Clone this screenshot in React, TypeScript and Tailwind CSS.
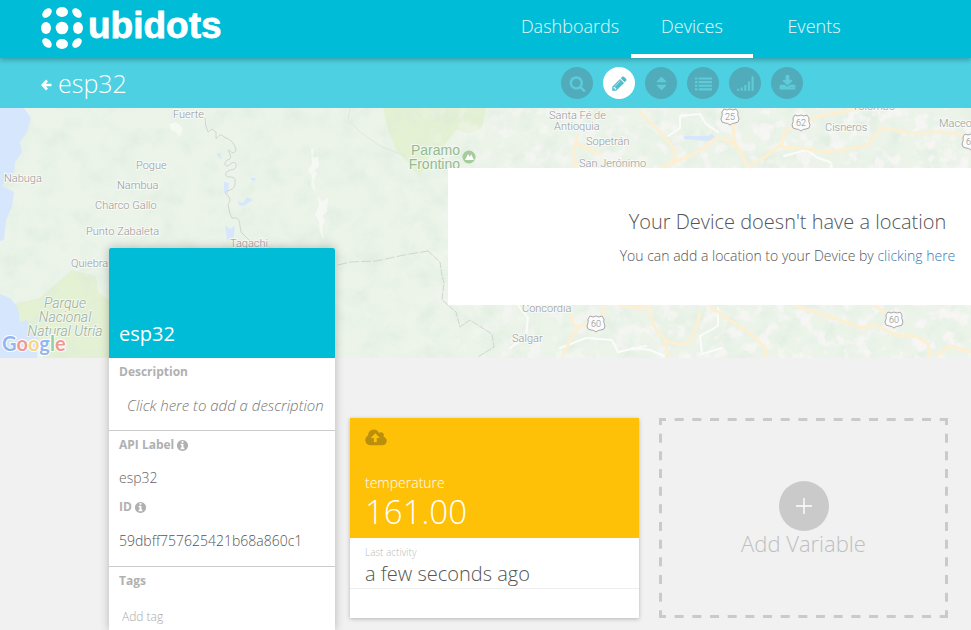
import { useState } from "react";
import type { ReactNode } from "react";

const PATHS = {
  search: "M1216 832q0-185-131.5-316.5t-316.5-131.5-316.5 131.5-131.5 316.5 131.5 316.5 316.5 131.5 316.5-131.5 131.5-316.5zm512 832q0 52-38 90t-90 38q-54 0-90-38l-343-342q-179 124-399 124-143 0-273.5-55.5t-225-150-150-225-55.5-273.5 55.5-273.5 150-225 225-150 273.5-55.5 273.5 55.5 225 150 150 225 55.5 273.5q0 220-124 399l343 343q37 37 37 90z",
  pencil: "M491 1536l91-91-235-235-91 91v107h128v128h107zm523-928q0-22-22-22-10 0-17 7l-542 542q-7 7-7 17 0 22 22 22 10 0 17-7l542-542q7-7 7-17zm-54-192l416 416-832 832h-416v-416zm683 96q0 53-37 90l-166 166-416-416 166-165q36-38 90-38 53 0 91 38l235 234q37 39 37 91z",
  sort: "M1408 1088q0 26-19 45l-448 448q-19 19-45 19t-45-19l-448-448q-19-19-19-45t19-45 45-19h896q26 0 45 19t19 45zm0-384q0 26-19 45t-45 19h-896q-26 0-45-19t-19-45 19-45l448-448q19-19 45-19t45 19l448 448q19 19 19 45z",
  list: "M0 256h256v224H0zM384 256h1408v224H384zM0 640h256v224H0zM384 640h1408v224H384zM0 1024h256v224H0zM384 1024h1408v224H384zM0 1408h256v224H0zM384 1408h1408v224H384z",
  signal: "M0 1440h224v224H0zM384 1312h224v352H384zM768 1056h224v608H768zM1152 672h224v992h-224zM1536 160h224v1504h-224z",
  download: "M1344 1344q0-26-19-45t-45-19-45 19-19 45 19 45 45 19 45-19 19-45zm256 0q0-26-19-45t-45-19-45 19-19 45 19 45 45 19 45-19 19-45zm128-224v320q0 40-28 68t-68 28h-1472q-40 0-68-28t-28-68v-320q0-40 28-68t68-28h465l135 136q58 56 136 56t136-56l136-136h464q40 0 68 28t28 68zm-325-569q17 41-14 70l-448 448q-18 19-45 19t-45-19l-448-448q-31-29-14-70 17-39 59-39h256v-448q0-26 19-45t45-19h256q26 0 45 19t19 45v448h256q42 0 59 39z",
  info: "M1152 1376v-160q0-14-9-23t-23-9h-96v-512q0-14-9-23t-23-9h-320q-14 0-23 9t-9 23v160q0 14 9 23t23 9h96v320h-96q-14 0-23 9t-9 23v160q0 14 9 23t23 9h448q14 0 23-9t9-23zm-128-896v-160q0-14-9-23t-23-9h-192q-14 0-23 9t-9 23v160q0 14 9 23t23 9h192q14 0 23-9t9-23zm640 416q0 209-103 385.5t-279.5 279.5-385.5 103-385.5-103-279.5-279.5-103-385.5 103-385.5 279.5-279.5 385.5-103 385.5 103 279.5 279.5 103 385.5z",
};

type IconName = keyof typeof PATHS;

function Icon({ name, className }: { name: IconName; className: string }) {
  return (
    <svg viewBox="0 0 1792 1792" fill="currentColor" aria-hidden className={className}>
      <path d={PATHS[name]} />
    </svg>
  );
}

const TOOLS: { name: IconName; label: string }[] = [
  { name: "search", label: "Search" },
  { name: "pencil", label: "Edit" },
  { name: "sort", label: "Sort" },
  { name: "list", label: "List view" },
  { name: "signal", label: "Signal" },
  { name: "download", label: "Download" },
];

const TOWNS: [string, number, number][] = [
  ["Fuerte", 173, 10],
  ["Pogue", 136, 61],
  ["Nabuga", 4, 74],
  ["Nambua", 117, 81],
  ["Charco Gallo", 95, 101],
  ["Punto Zabaleta", 86, 127],
  ["Tagachi", 230, 139],
  ["Quiebra", 71, 159],
  ["Santa Fé de", 549, 11],
  ["Antioquia", 554, 22],
  ["Sopetrán", 586, 37],
  ["San Jerónimo", 579, 59],
  ["Yolombó", 852, 2],
  ["Cisneros", 825, 23],
  ["Maceo", 939, 19],
  ["Concordia", 522, 204],
  ["Salgar", 512, 234],
];

const SHIELDS: [string, number, number][] = [
  ["25", 730, 9],
  ["62", 801, 15],
  ["62", 971, 34],
  ["60", 596, 216],
  ["60", 894, 212],
];

const ROADS = [
  "M640 4L660 24L672 38L676 52L660 60",
  "M660 60L690 48L704 40L716 30L728 32L740 42L748 60",
  "M733 16L734 32L746 56",
  "M746 60L766 48L782 36L784 24L798 16L820 8L852 2L880 0",
  "M782 39L800 40L828 44L866 38L882 20L910 25L940 24L971 28",
  "M577 28L574 44L576 60",
  "M577 36L600 46",
  "M647 197L655 220L665 232L680 237L692 232L700 205",
  "M665 232L668 250",
  "M710 198L726 210L742 220L758 232L766 242L766 250",
  "M795 198L828 208L862 220L874 216L896 227L916 228L928 236L930 250",
  "M568 197L573 215L578 220L569 234L562 250",
  "M604 197L602 212L580 218",
  "M620 198L640 200L652 197",
  "M936 248L950 238L971 244",
  "M864 190L884 204",
];

const WHITE_ROADS = [
  "M668 28L680 20L680 8L700 6L706 16L718 24",
  "M784 48L806 42L818 50L830 54L832 60",
  "M718 200L718 218L700 228L702 246L722 240",
  "M518 197L528 210L526 228L510 240",
  "M560 240L586 230L612 232L618 244L646 238",
  "M632 240L650 242L664 248",
];

function MapBackground() {
  return (
    <svg viewBox="0 0 971 250" preserveAspectRatio="xMinYMin slice" className="absolute inset-0 h-full w-full" role="img" aria-label="Map">
      <defs>
        {/* broken white patches of the mountain relief */}
        <filter id="relief" x="0" y="0" width="100%" height="100%" colorInterpolationFilters="sRGB">
          <feTurbulence type="fractalNoise" baseFrequency="0.07" numOctaves="5" seed="8" />
          <feColorMatrix values="0 0 0 0 .975  0 0 0 0 .965  0 0 0 0 .965  5 0 0 0 -2.5" />
        </filter>
        <filter id="shade" x="0" y="0" width="100%" height="100%" colorInterpolationFilters="sRGB">
          <feTurbulence type="fractalNoise" baseFrequency="0.05" numOctaves="4" seed="3" />
          <feColorMatrix values="0 0 0 0 .86  0 0 0 0 .92  0 0 0 0 .86  0 2 0 0 -.85" />
        </filter>
        <linearGradient id="eastFade">
          <stop offset="0" stopColor="#fff" stopOpacity="0" />
          <stop offset=".4" stopColor="#fff" stopOpacity=".05" />
          <stop offset=".55" stopColor="#fff" stopOpacity=".6" />
          <stop offset="1" stopColor="#fff" stopOpacity=".9" />
        </linearGradient>
        <mask id="east"><rect width="971" height="250" fill="url(#eastFade)" /></mask>
      </defs>

      <rect width="971" height="250" fill="#ecf4ea" />
      <g fill="#e4f1d3">
        <path d="M383 0H486L482 20L470 26L456 22L444 38L432 42L420 70L408 55L396 42L388 22Z" />
        <path d="M14 196L40 190L60 172L72 162L96 168L98 184L112 194V250H44L38 238L24 226Z" />
      </g>
      <rect width="971" height="250" filter="url(#shade)" opacity=".6" />
      <g mask="url(#east)"><rect width="971" height="250" filter="url(#relief)" /></g>

      <g fill="#d6e6fc">
        <path d="M0 0H24L31 10L27 24L20 34L22 44L15 54L14 64L2 78L14 84L12 98L6 112L4 132L0 133Z" />
        <path d="M0 186L10 190L18 200L20 214L26 212L38 228L37 250H0Z" />
        <path d="M225 117L230 121L235 118L234 129L227 132Z" />
        <path d="M237 93L243 95L247 89L253 92L245 97L240 98Z" />
        <path d="M217 45L220 45L222 51L218 49ZM250 70L256 70L254 74ZM224 74L229 75L228 86L224 84Z" />
        <path d="M684 28L708 28L712 26L716 30L708 33L684 31Z" />
      </g>
      <g fill="#fafbf8" opacity=".7">
        <path d="M170 16L176 14L183 20L180 28L176 24L171 22Z" />
        <path d="M311 42L314 40L313 50L318 48L319 58L314 62L317 66L314 72L316 84L311 78L312 68L308 62L312 56Z" />
        <path d="M318 88L322 94L328 90L327 104L322 108L325 114L322 118L324 132L320 124L319 114L315 106L319 98Z" />
      </g>

      <g fill="none" strokeLinejoin="round" strokeLinecap="round">
        <path stroke="#d0d5d4" d="M205 10Q205 18 208 24L212 21L216 24L216 31Q221 24 224 29Q234 32 236 42Q234 47 230 43Q226 40 230 46Q232 52 227 52Q222 58 228 58Q234 52 236 56Q237 62 230 62Q222 66 228 69Q236 68 235 74Q236 80 230 82Q222 84 228 88Q232 92 228 96L230 106L232 110Q240 108 240 118L241 124L251 134" />
        <path stroke="#e0e7de" d="M350 0L348 12L360 24L380 38L405 48" />
        <path stroke="#d0d6cf" strokeDasharray="9 3" d="M338 157L350 154L376 153L404 147L428 143" />
        <path stroke="#d0d6cf" strokeDasharray="6 2" d="M428 143L440 154L442 168L444 174L442 192L456 204L460 219L470 212L492 226L494 239L478 249" />
        <g stroke="#fbfcfa" strokeWidth="2">{WHITE_ROADS.map((d) => <path key={d} d={d} />)}</g>
        <g stroke="#fcefd2" strokeWidth="3">{ROADS.map((d) => <path key={d} d={d} />)}</g>
      </g>

      <g fontFamily="Roboto, sans-serif" fontSize="11" fill="#989898" stroke="#f7faf6" strokeWidth="2" paintOrder="stroke">
        {TOWNS.map(([name, x, y]) => <text key={name} x={x} y={y}>{name}</text>)}
      </g>
      <g fontFamily="Roboto, sans-serif" fontSize="14" fill="#98ab98" stroke="#f2f8ee" strokeWidth="2" paintOrder="stroke">
        <g fontStyle="italic" textAnchor="middle">
          <text x="65" y="200">Parque</text>
          <text x="65" y="214">Nacional</text>
          <text x="65" y="228">Natural Utría</text>
        </g>
        <g fontFamily="Liberation Sans, sans-serif" fill="#95b891" textAnchor="end">
          <text x="460" y="47">Paramo</text>
          <text x="460" y="61">Frontino</text>
        </g>
      </g>
      <circle cx="469" cy="49" r="6.5" fill="#a4cc9c" />
      <path d="M465 52L468 46L470 49L471 46L474 52Z" fill="#fff" />

      {SHIELDS.map(([num, x, y]) => (
        <g key={`${num}-${x}`}>
          <path transform={`translate(${x} ${y})`} d="M-8-5L-6-8Q-3-6 0-8Q3-6 6-8L8-5Q7-2 9 2Q9 6 5 6Q2 6 0 8Q-2 6-5 6Q-9 6-9 2Q-7-2-8-5Z" fill="#fbfbfb" stroke="#a9a9a9" />
          <text x={x} y={y + 3} textAnchor="middle" fontFamily="Roboto, sans-serif" fontSize="9" fill="#888">{num}</text>
        </g>
      ))}

      <text x="2" y="243" fontFamily="Lato, sans-serif" fontWeight="700" fontSize="20" stroke="#fff" strokeWidth="2" paintOrder="stroke">
        <tspan fill="#94b6ee">G</tspan><tspan fill="#ee9a92">o</tspan><tspan fill="#f5d883">o</tspan><tspan fill="#94b6ee">g</tspan><tspan fill="#94cda2">l</tspan><tspan fill="#ee9a92">e</tspan>
      </text>
    </svg>
  );
}

function Logo() {
  return (
    <svg width="182" height="44" viewBox="0 0 182 44" fill="#fff" role="img" aria-label="ubidots">
      <circle cx="22" cy="21" r="6.3" />
      <ellipse cx="22" cy="5" rx="6" ry="5" />
      <ellipse cx="22" cy="37" rx="6" ry="5" />
      <ellipse cx="6" cy="21" rx="5" ry="6" />
      <ellipse cx="38" cy="21" rx="5" ry="6" />
      <ellipse cx="7" cy="6" rx="5.6" ry="3.8" transform="rotate(-45 7 6)" />
      <ellipse cx="37" cy="6" rx="5.6" ry="3.8" transform="rotate(45 37 6)" />
      <ellipse cx="7" cy="36" rx="5.6" ry="3.8" transform="rotate(45 7 36)" />
      <ellipse cx="37" cy="36" rx="5.6" ry="3.8" transform="rotate(-45 37 36)" />
      <text x="48" y="31" fontFamily="Liberation Sans, sans-serif" fontWeight="700" fontSize="37" stroke="#fff" strokeWidth=".8" strokeLinejoin="round">ubidots</text>
    </svg>
  );
}

function FieldLabel({ children, info, htmlFor }: { children: ReactNode; info?: boolean; htmlFor?: string }) {
  const cls = "flex items-center gap-0.5 text-xs leading-[18px] font-bold text-[#b0b0b0]";
  const icon = info && <Icon name="info" className="h-[13px] w-[13px]" />;
  return htmlFor ? <label htmlFor={htmlFor} className={cls}>{children}{icon}</label> : <h3 className={cls}>{children}{icon}</h3>;
}

export default function App() {
  const [tab, setTab] = useState("Devices");
  const [tool, setTool] = useState<IconName>("pencil");
  const [tag, setTag] = useState("");

  return (
    <div className="flex min-h-screen flex-col overflow-x-hidden bg-[#f1f1f1] font-['Open_Sans',sans-serif] font-light text-[#555]">
      <header className="relative z-10 flex h-[58px] items-center bg-[#00bcd7] pr-24 pl-10 shadow-[0_2px_5px_rgba(0,0,0,0.26)]">
        <a href="#home"><Logo /></a>
        <nav className="ml-auto flex h-full">
          {["Dashboards", "Devices", "Events"].map((t) => (
            <a key={t} href={`#${t.toLowerCase()}`} onClick={() => setTab(t)} className={`flex w-[122px] justify-center border-b-4 pt-3 text-lg leading-7 text-white/90 ${tab === t ? "border-white" : "border-transparent"}`}>{t}</a>
          ))}
        </nav>
      </header>

      <div className="flex h-[50px] items-center justify-between bg-[#4dd0e1] pr-[168px] pl-10">
        <a href="#devices" className="flex items-center gap-1.5 text-white">
          <svg viewBox="0 0 12 12" fill="none" stroke="currentColor" strokeWidth="2.6" aria-hidden className="mt-1 h-3 w-3"><path d="M7 1.5L2.8 6L7 10.5M2.8 6H11.5" /></svg>
          <h1 className="text-[25px] leading-9">esp32</h1>
        </a>
        <div className="flex gap-2.5">
          {TOOLS.map(({ name, label }) => (
            <button key={name} aria-label={label} onClick={() => setTool(name)} className={`grid h-8 w-8 place-items-center rounded-full ${tool === name ? "bg-white text-[#4dbdd0]" : "bg-[#50acba] text-[#5fcbd9]"}`}>
              <Icon name={name} className="h-[17px] w-[17px]" />
            </button>
          ))}
        </div>
      </div>

      <section className="relative flex h-[250px] items-start justify-end overflow-hidden pt-[60px]">
        <MapBackground />
        <div className="relative ml-[448px] flex h-[137px] flex-1 flex-col items-center justify-center gap-2.5 bg-white pr-3 pl-[168px] whitespace-nowrap">
          <h2 className="text-xl leading-7">Your Device doesn&apos;t have a location</h2>
          <p className="text-sm leading-5">You can add a location to your Device by <a href="#location" className="text-[#337ab7]">clicking here</a></p>
        </div>
      </section>

      <main className="relative flex flex-1 gap-[15px] pr-[23px] pl-[109px]">
        <aside className="-mt-[110px] flex w-[226px] shrink-0 flex-col rounded-t-[2px] bg-white shadow-[0_0_10px_rgba(0,0,0,0.25)]">
          <div className="flex h-[110px] items-end rounded-t-[2px] bg-[#00bcd7] px-2.5 pb-2.5">
            <h2 className="text-xl leading-7 font-normal text-white">esp32</h2>
          </div>
          <div className="border-b border-[#ccc] px-2.5 pt-[5px] pb-[15px]">
            <FieldLabel>Description</FieldLabel>
            <button className="mt-3.5 block pl-2 text-[15px] leading-5 whitespace-nowrap text-[#777] italic">Click here to add a description</button>
          </div>
          <div className="border-b border-[#ccc] px-2.5 pt-[5px] pb-[15px]">
            <FieldLabel info>API Label</FieldLabel>
            <p className="mt-3.5 mb-2.5 text-sm leading-5 text-[#666]">esp32</p>
            <FieldLabel info>ID</FieldLabel>
            <p className="mt-3.5 pt-px text-sm leading-5">59dbff757625421b68a860c1</p>
          </div>
          <div className="px-2.5 pt-[5px]">
            <FieldLabel htmlFor="tag">Tags</FieldLabel>
            <input id="tag" value={tag} onChange={(e) => setTag(e.target.value)} placeholder="Add tag" className="mt-4 block h-5 w-full px-[3px] text-xs placeholder:text-[#aaa] focus:outline-none" />
          </div>
        </aside>

        <div className="grid flex-1 grid-cols-2 items-start gap-5 pt-[60px]">
          <article className="h-[200px] bg-white shadow-[0_1px_4px_rgba(0,0,0,0.25)]">
            <div className="flex h-[120px] flex-col bg-[#ffc107] px-[15px] pt-2.5 pb-2 text-white">
              <svg viewBox="0 0 1920 1792" fill="#b98f0b" aria-hidden className="h-5 w-[22px]">
                <path d="M1280 864q0-14-9-23l-352-352q-9-9-23-9t-23 9l-351 351q-10 12-10 24 0 14 9 23t23 9h224v352q0 13 9.5 22.5t22.5 9.5h192q13 0 22.5-9.5t9.5-22.5v-352h224q13 0 22.5-9.5t9.5-22.5zm640 288q0 159-112.5 271.5t-271.5 112.5h-1088q-185 0-316.5-131.5t-131.5-316.5q0-130 70-240t188-165q-2-30-2-43 0-212 150-362t362-150q156 0 285.5 87t188.5 231q71-62 166-62 106 0 181 75t75 181q0 76-41 138 130 31 213.5 135.5t83.5 238.5z" />
              </svg>
              <h3 className="mt-auto text-sm leading-[22px]">temperature</h3>
              <p className="text-[33px] leading-9">161.00</p>
            </div>
            <div className="border-b border-[#eee] px-[15px] pt-1.5">
              <p className="text-[10px] leading-4 text-[#bbb]">Last activity</p>
              <p className="text-xl leading-7">a few seconds ago</p>
            </div>
          </article>

          <button className="relative flex h-[200px] flex-col items-center justify-center text-[#bfbfbf]">
            <svg aria-hidden className="absolute inset-0 h-full w-full" stroke="#cacaca" strokeWidth="6">
              <line x1="0" y1="0" x2="100%" y2="0" pathLength="289" strokeDasharray="9 8.67" strokeDashoffset="2" />
              <line x1="0" y1="100%" x2="100%" y2="100%" pathLength="289" strokeDasharray="9 8.67" strokeDashoffset="2" />
              <line x1="0" y1="0" x2="0" y2="100%" pathLength="200" strokeDasharray="9 8.67" strokeDashoffset="2" />
              <line x1="100%" y1="0" x2="100%" y2="100%" pathLength="200" strokeDasharray="9 8.67" strokeDashoffset="2" />
            </svg>
            <span className="grid h-[50px] w-[50px] place-items-center rounded-full bg-[#cacaca]">
              <svg viewBox="0 0 16 16" stroke="#fff" strokeWidth="1.4" aria-hidden className="h-4 w-4"><path d="M8 0V16M0 8H16" /></svg>
            </span>
            <span className="text-[22px] leading-6">Add Variable</span>
          </button>
        </div>
      </main>
    </div>
  );
}
